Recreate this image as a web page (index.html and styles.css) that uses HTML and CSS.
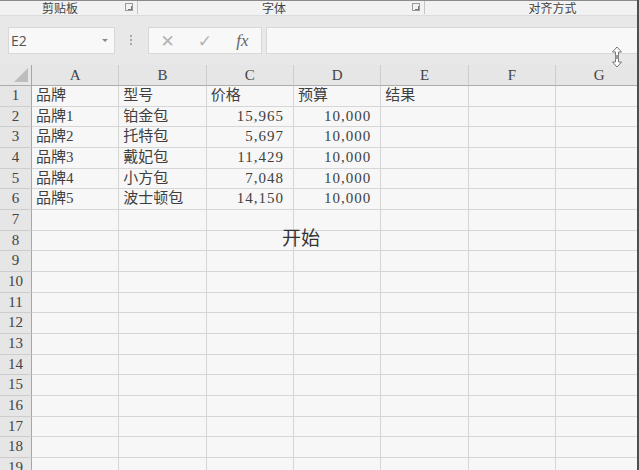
FILE: index.html
```html
<!DOCTYPE html>
<html lang="zh-CN">
<head>
  <meta charset="UTF-8">
  <title>工作簿1 - Excel</title>
  <link rel="stylesheet" href="styles.css">
</head>
<body>
  <div class="window">
    <div class="ribbon">
      <div class="group g-clip"><span class="group-label">剪贴板</span><span class="launcher"></span></div>
      <div class="group g-font"><span class="group-label">字体</span><span class="launcher"></span></div>
      <div class="group g-align"><span class="group-label">对齐方式</span></div>
    </div>
    <div class="toolbar">
      <div class="name-box"><span>E2</span><span class="caret"></span></div>
      <div class="grip"></div>
      <div class="fx-box">
        <span class="fx-btn cancel">&#x2715;</span>
        <span class="fx-btn enter">&#x2713;</span>
        <span class="fx-btn fx"><i>fx</i></span>
      </div>
      <div class="formula-input"></div>
    </div>

    <div class="sheet">
      <div class="row head">
        <div class="rh corner"><span class="corner-tri"></span></div>
        <div class="ch">A</div><div class="ch">B</div><div class="ch">C</div><div class="ch">D</div><div class="ch">E</div><div class="ch">F</div><div class="ch">G</div>
      </div>
      <div class="row"><div class="rh">1</div><div>品牌</div><div>型号</div><div>价格</div><div>预算</div><div>结果</div><div></div><div></div></div>
      <div class="row"><div class="rh">2</div><div>品牌1</div><div>铂金包</div><div class="num">15,965</div><div class="num">10,000</div><div></div><div></div><div></div></div>
      <div class="row"><div class="rh">3</div><div>品牌2</div><div>托特包</div><div class="num">5,697</div><div class="num">10,000</div><div></div><div></div><div></div></div>
      <div class="row"><div class="rh">4</div><div>品牌3</div><div>戴妃包</div><div class="num">11,429</div><div class="num">10,000</div><div></div><div></div><div></div></div>
      <div class="row"><div class="rh">5</div><div>品牌4</div><div>小方包</div><div class="num">7,048</div><div class="num">10,000</div><div></div><div></div><div></div></div>
      <div class="row"><div class="rh">6</div><div>品牌5</div><div>波士顿包</div><div class="num">14,150</div><div class="num">10,000</div><div></div><div></div><div></div></div>
      <div class="row"><div class="rh">7</div><div></div><div></div><div></div><div></div><div></div><div></div><div></div></div>
      <div class="row"><div class="rh">8</div><div></div><div></div><div></div><div></div><div></div><div></div><div></div></div>
      <div class="row"><div class="rh">9</div><div></div><div></div><div></div><div></div><div></div><div></div><div></div></div>
      <div class="row"><div class="rh">10</div><div></div><div></div><div></div><div></div><div></div><div></div><div></div></div>
      <div class="row"><div class="rh">11</div><div></div><div></div><div></div><div></div><div></div><div></div><div></div></div>
      <div class="row"><div class="rh">12</div><div></div><div></div><div></div><div></div><div></div><div></div><div></div></div>
      <div class="row"><div class="rh">13</div><div></div><div></div><div></div><div></div><div></div><div></div><div></div></div>
      <div class="row"><div class="rh">14</div><div></div><div></div><div></div><div></div><div></div><div></div><div></div></div>
      <div class="row"><div class="rh">15</div><div></div><div></div><div></div><div></div><div></div><div></div><div></div></div>
      <div class="row"><div class="rh">16</div><div></div><div></div><div></div><div></div><div></div><div></div><div></div></div>
      <div class="row"><div class="rh">17</div><div></div><div></div><div></div><div></div><div></div><div></div><div></div></div>
      <div class="row"><div class="rh">18</div><div></div><div></div><div></div><div></div><div></div><div></div><div></div></div>
      <div class="row"><div class="rh">19</div><div></div><div></div><div></div><div></div><div></div><div></div><div></div></div>
    </div>

    <div class="start-shape">开始</div>
    <svg class="resize-cursor" width="12" height="22" viewBox="0 0 12 22">
      <path d="M6 1 L10.5 6 L7.5 6 L7.5 16 L10.5 16 L6 21 L1.5 16 L4.5 16 L4.5 6 L1.5 6 Z" fill="#fff" stroke="#777" stroke-width="1"/>
      <rect x="4.5" y="9" width="3" height="4" fill="#999"/>
    </svg>
  </div>
</body>
</html>
```

FILE: styles.css
```css
html, body { margin: 0; padding: 0; }
body { width: 639px; height: 470px; overflow: hidden; background: #f7f7f7; font-family: "Liberation Serif", "Noto Sans CJK SC", serif; color: #3f3f3f; }
.window { position: relative; width: 639px; height: 470px; box-sizing: border-box; border-right: 2px solid #4f4f4f; overflow: hidden; }

/* ribbon group captions */
.ribbon { display: flex; height: 16px; background: #f2f2f2; border-top: 1px solid #8a8a8a; box-sizing: border-box; border-bottom: 1px solid #dcdcdc; overflow: hidden; }
.group { display: flex; flex: none; align-items: flex-start; border-right: 1px solid #c6c6c6; height: 13px; }
.g-clip { width: 137px; }
.g-font { width: 286px; }
.g-align { width: 255px; border-right: none; }
.group-label { flex: 1; text-align: center; font-family: "Noto Sans CJK SC", sans-serif; font-size: 12px; line-height: 13px; color: #444; }
.g-clip .group-label { padding-right: 3px; }
.launcher { width: 6px; height: 6px; margin: 2px 4px 0 2px; border: 1px solid #9a9a9a; position: relative; }
.launcher::after { content: ""; position: absolute; right: 0; bottom: 0; width: 3px; height: 3px; border-right: 1px solid #777; border-bottom: 1px solid #777; }

/* name box + formula bar */
.toolbar { display: flex; height: 49px; padding: 11px 0 11px 8px; box-sizing: border-box; background: #e8e8e8; }
.name-box { width: 107px; display: flex; align-items: center; justify-content: space-between; background: #f8f8f8; border: 1px solid #d8d8d8; box-sizing: border-box; padding: 0 6px 0 2px; font-family: "Open Sans", sans-serif; font-size: 14px; color: #555; }
.caret { width: 0; height: 0; border-left: 3px solid transparent; border-right: 3px solid transparent; border-top: 3px solid #888; }
.grip { width: 33px; position: relative; }
.grip::before { content: ""; position: absolute; left: 15px; top: 7px; width: 2px; height: 12px; background: radial-gradient(circle, #a8a8a8 45%, transparent 55%) 0 0 / 2px 4px repeat-y; }
.fx-box { width: 114px; display: flex; align-items: center; background: #f8f8f8; border: 1px solid #d8d8d8; box-sizing: border-box; }
.fx-btn { width: 38px; text-align: center; color: #b4b4b4; font-family: "DejaVu Sans", sans-serif; font-size: 17px; }
.fx-btn.fx { color: #666; font-family: "Liberation Serif", serif; font-size: 17px; }
.formula-input { flex: 1; margin-left: 4px; background: #f8f8f8; border: 1px solid #d8d8d8; border-right: none; }

/* grid */
.sheet { background: #f7f7f7; }
.row { display: flex; height: 20.67px; }
.row > div { flex: none; width: 87.33px; height: 100%; box-sizing: border-box; border-right: 1px solid #d6d6d6; border-bottom: 1px solid #d6d6d6; font-size: 15px; line-height: 19px; padding-left: 4px; white-space: nowrap; }
.row > div.num { text-align: right; padding: 0 9px 0 0; letter-spacing: 1px; }
.row > .rh { width: 32px; padding: 0; text-align: center; background: #e6e6e6; border-right-color: #a6a6a6; border-bottom-color: #cdcdcd; color: #444; }
.row.head { height: 21px; }
.row.head > div { background: #e6e6e6; border-bottom-color: #acacac; border-right-color: #cdcdcd; text-align: center; padding: 0; font-size: 15px; line-height: 20px; color: #444; }
.row.head > .rh { border-right-color: #a6a6a6; }
.corner { position: relative; }
.corner-tri { position: absolute; right: 3px; bottom: 3px; width: 0; height: 0; border-left: 14px solid transparent; border-bottom: 14px solid #bdbdbd; }

/* floating shape and cursor */
.start-shape { position: absolute; left: 282px; top: 226px; font-family: "Noto Sans CJK SC", sans-serif; font-size: 19px; line-height: 22px; color: #333; }
.resize-cursor { position: absolute; left: 611px; top: 46px; }
```
